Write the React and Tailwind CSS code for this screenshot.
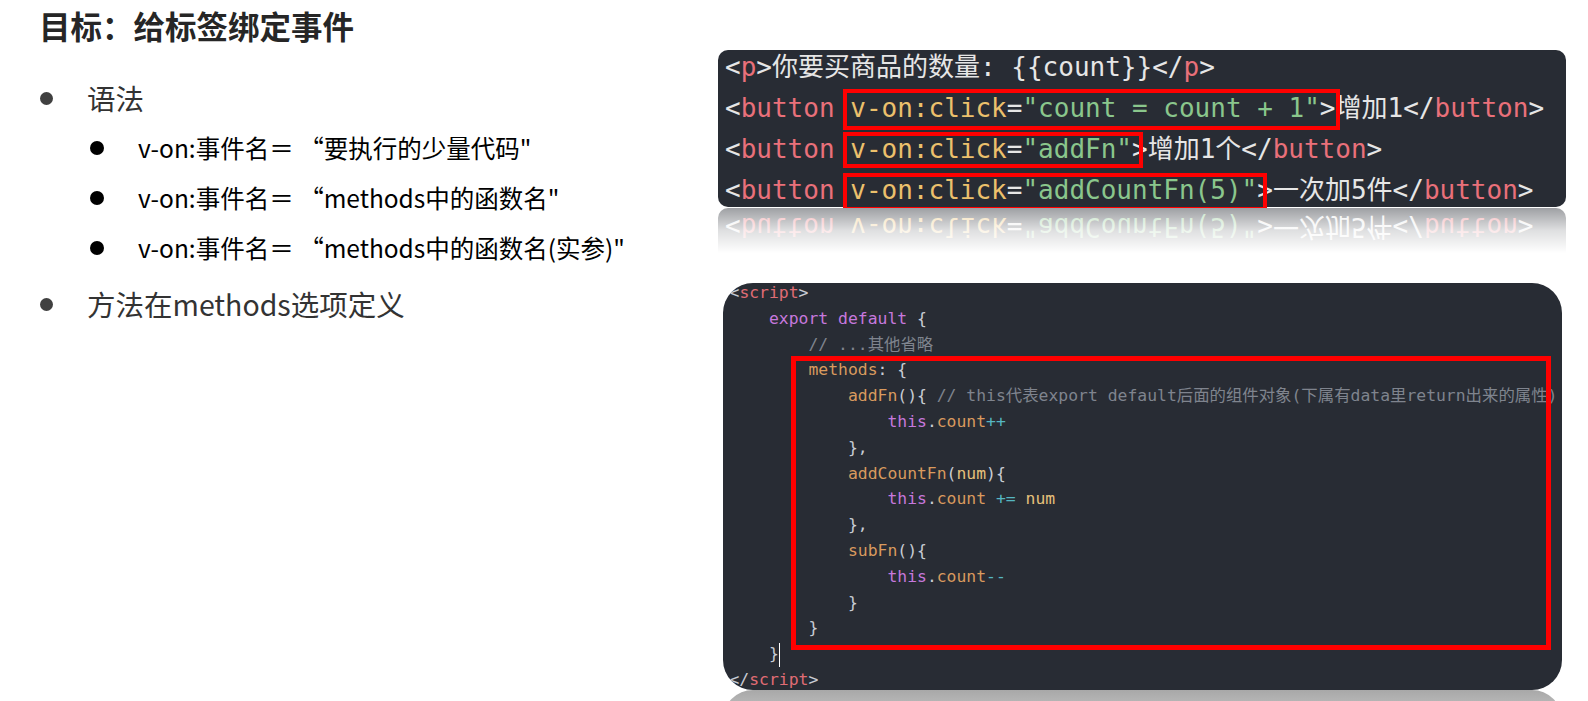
import React from 'react';

const W = 'text-[#e6e6e6]';
const R = 'text-[#e9707a]';
const Y = 'text-[#ecc06c]';
const G = 'text-[#8ac68c]';

const P = 'text-[#c8ccd4]';
const RED = 'text-[#e06c75]';
const PUR = 'text-[#c678dd]';
const OR = 'text-[#d99a5e]';
const CY = 'text-[#56b6c2]';
const YE = 'text-[#e5c07b]';
const CM = 'text-[#7f848e]';

const topLines = [
    [['<', W], ['p', R], ['>你要买商品的数量: {{count}}</', W], ['p', R], ['>', W]],
    [['<', W], ['button', R], [' ', W], ['v-on:click', Y], ['=', W], ['"count = count + 1"', G], ['>增加1</', W], ['button', R], ['>', W]],
    [['<', W], ['button', R], [' ', W], ['v-on:click', Y], ['=', W], ['"addFn"', G], ['>增加1个</', W], ['button', R], ['>', W]],
    [['<', W], ['button', R], [' ', W], ['v-on:click', Y], ['=', W], ['"addCountFn(5)"', G], ['>一次加5件</', W], ['button', R], ['>', W]],
];

const scriptLines = [
    [['<', P], ['script', RED], ['>', P]],
    [['    ', P], ['export', PUR], [' ', P], ['default', PUR], [' {', P]],
    [['        // ...其他省略', CM]],
    [['        ', P], ['methods', OR], [': {', P]],
    [['            ', P], ['addFn', OR], ['(){ ', P], ['// this代表export default后面的组件对象(下属有data里return出来的属性)', CM]],
    [['                ', P], ['this', PUR], ['.', P], ['count', OR], ['++', CY]],
    [['            },', P]],
    [['            ', P], ['addCountFn', OR], ['(', P], ['num', YE], ['){', P]],
    [['                ', P], ['this', PUR], ['.', P], ['count', OR], [' ', P], ['+=', CY], [' ', P], ['num', YE]],
    [['            },', P]],
    [['            ', P], ['subFn', OR], ['(){', P]],
    [['                ', P], ['this', PUR], ['.', P], ['count', OR], ['--', CY]],
    [['            }', P]],
    [['        }', P]],
    [['    }', P], ['cursor', '']],
    [['</', P], ['script', RED], ['>', P]],
];

const mono = "font-['DejaVu_Sans_Mono','Noto_Sans_CJK_SC',monospace]";

function CodeLine({ tokens, className }) {
    return (
        <div className={`whitespace-pre ${className}`}>
            {tokens.map(([t, c], i) =>
                t === 'cursor' ? (
                    <span key={i} className="inline-block w-px h-[24px] bg-white align-middle" />
                ) : (
                    <span key={i} className={c}>{t}</span>
                )
            )}
        </div>
    );
}

function Bullet({ level, children }) {
    if (level === 1) {
        return (
            <li className="flex items-center h-[50px] pl-[1px]">
                <span className="w-[13px] h-[13px] rounded-full bg-[#404040] shrink-0" />
                <span className="ml-[34px] text-[28.5px] text-[#333333]">{children}</span>
            </li>
        );
    }
    return (
        <li className="flex items-center h-[50px] pl-[51px]">
            <span className="w-[14px] h-[14px] rounded-full bg-black shrink-0" />
            <span className="ml-[34px] text-[24.5px] text-black">{children}</span>
        </li>
    );
}

export default function App() {
    return (
        <div className="w-[1588px] h-[701px] bg-white flex overflow-hidden">
            {/* left: title + list */}
            <div className="w-[718px] shrink-0 pl-[39px] pt-[5px] font-['Noto_Sans_CJK_SC',sans-serif]">
                <h1 className="text-[31.5px] leading-[40px] font-bold text-[#262626]">目标：给标签绑定事件</h1>
                <ul className="mt-[28px]">
                    <Bullet level={1}>语法</Bullet>
                    <Bullet level={2}>v-on:事件名＝ “要执行的少量代码"</Bullet>
                    <Bullet level={2}>v-on:事件名＝ “methods中的函数名"</Bullet>
                    <Bullet level={2}>v-on:事件名＝ “methods中的函数名(实参)"</Bullet>
                    <div className="mt-[6px]">
                        <Bullet level={1}>方法在methods选项定义</Bullet>
                    </div>
                </ul>
            </div>

            {/* right: code shots */}
            <div className="w-[848px] shrink-0 flex flex-col">
                <div className="relative mt-[50px]">
                    <div className={`h-[157px] rounded-[10px] bg-[#282c34] overflow-hidden pl-[7px] ${mono} text-[26px]`}>
                        <div className="-mt-[3.5px]">
                            {topLines.map((l, i) => (
                                <CodeLine key={i} tokens={l} className="leading-[41px]" />
                            ))}
                        </div>
                    </div>
                    <div className="absolute left-[125px] top-[39px] w-[497px] h-[41px] border-[4px] border-[#ff0000]" />
                    <div className="absolute left-[125px] top-[82px] w-[300px] h-[36px] border-[4px] border-[#ff0000]" />
                    <div className="absolute left-[125px] top-[123px] w-[424px] h-[38px] border-[4px] border-[#ff0000]" />
                </div>

                {/* reflection of the top shot */}
                <div className="relative h-[45px] overflow-hidden mt-[1px]">
                    <div className={`h-[45px] scale-y-[-1] rounded-b-[10px] bg-[#282c34] pl-[7px] pt-[6px] ${mono} text-[26px]`}>
                        <CodeLine tokens={topLines[3]} className="leading-[41px]" />
                    </div>
                    <div className="absolute inset-0 bg-linear-to-b from-white/55 via-white/85 to-white" />
                </div>

                <div className="relative mt-[30px] ml-[5px] w-[839px]">
                    <div className={`h-[407px] rounded-[30px] bg-[#282c34] overflow-hidden pl-[6.5px] ${mono} text-[16.4px]`}>
                        <div className="-mt-[3px]">
                            {scriptLines.map((l, i) => (
                                <CodeLine key={i} tokens={l} className="leading-[25.8px]" />
                            ))}
                        </div>
                    </div>
                    <div className="absolute left-[68px] top-[73px] w-[760px] h-[294px] border-[5px] border-[#ff0000]" />
                </div>

                {/* reflection of the bottom shot */}
                <div className="h-[11px] overflow-hidden ml-[5px] w-[839px]">
                    <div className="h-[40px] rounded-t-[30px] bg-linear-to-b from-[#a8a8a8] to-[#d4d4d4]" />
                </div>
            </div>
        </div>
    );
}
